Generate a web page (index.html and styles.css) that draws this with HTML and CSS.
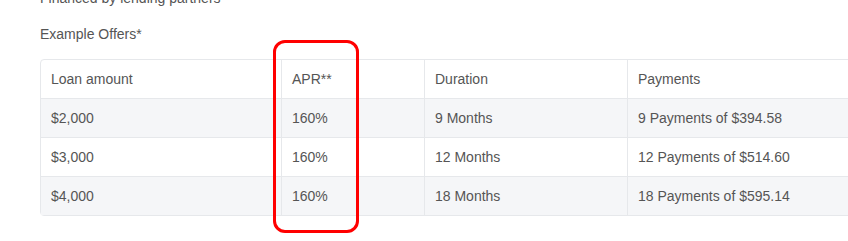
FILE: index.html
```html
<!DOCTYPE html>
<html>
<head>
<meta charset="utf-8">
<link rel="stylesheet" href="styles.css">
</head>
<body>
<div class="page">
  <p class="note">Financed by lending partners</p>
  <p class="title">Example Offers*</p>
  <table class="offers">
    <colgroup>
      <col class="c1"><col class="c2"><col class="c3"><col class="c4">
    </colgroup>
    <thead>
      <tr><th>Loan amount</th><th>APR**</th><th>Duration</th><th>Payments</th></tr>
    </thead>
    <tbody>
      <tr><td>$2,000</td><td>160%</td><td>9 Months</td><td>9 Payments of $394.58</td></tr>
      <tr><td>$3,000</td><td>160%</td><td>12 Months</td><td>12 Payments of $514.60</td></tr>
      <tr><td>$4,000</td><td>160%</td><td>18 Months</td><td>18 Payments of $595.14</td></tr>
    </tbody>
  </table>
  <div class="highlight"></div>
</div>
</body>
</html>
```
FILE: styles.css
```css
html, body {
  margin: 0;
  padding: 0;
  background: #fff;
  overflow: hidden;
}
.page {
  position: relative;
  width: 848px;
  height: 241px;
  overflow: hidden;
  padding-left: 40px;
  box-sizing: border-box;
  font-family: "Liberation Sans", Arial, sans-serif;
  font-size: 14px;
  color: #555;
}
.note {
  margin: -11px 0 0 0;
  line-height: 18px;
}
.title {
  margin: 18px 0 16px 0;
  line-height: 18px;
}
.offers {
  border-collapse: separate;
  border-spacing: 0;
  table-layout: fixed;
  width: 830px;
  border: 1px solid #e6e8eb;
  border-radius: 4px;
}
.c1 { width: 240px; }
.c2 { width: 143px; }
.c3 { width: 203px; }
.c4 { width: 244px; }
.offers th, .offers td {
  text-align: left;
  font-weight: normal;
  padding: 10px 10px 10px 10px;
  line-height: 18px;
  border-top: 1px solid #e6e8eb;
  border-left: 1px solid #e6e8eb;
  white-space: nowrap;
}
.offers thead th { border-top: none; }
.offers th:first-child, .offers td:first-child { border-left: none; }
.offers tbody tr:nth-child(odd) td { background: #f5f6f8; }
.highlight {
  position: absolute;
  left: 273px;
  top: 40px;
  width: 86px;
  height: 193px;
  box-sizing: border-box;
  border: 3px solid #ff0000;
  border-radius: 12px;
}
```
